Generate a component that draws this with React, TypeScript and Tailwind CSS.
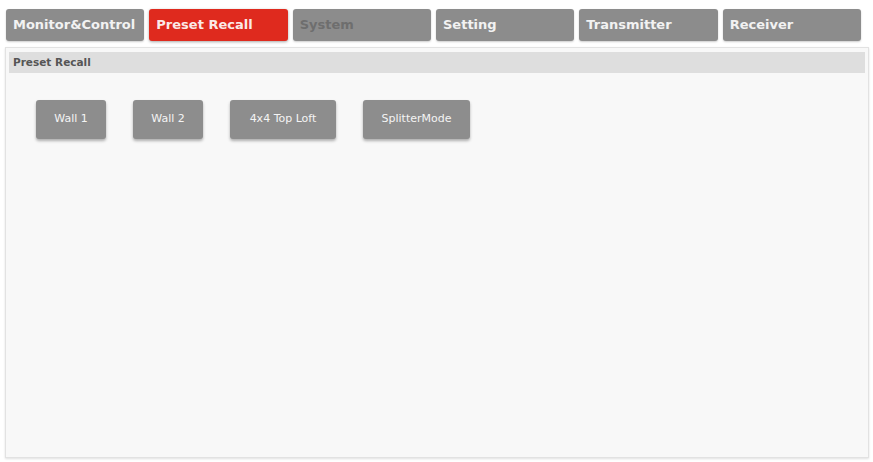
const tabs = [
  { label: 'Monitor&Control', state: 'normal' },
  { label: 'Preset Recall', state: 'active' },
  { label: 'System', state: 'disabled' },
  { label: 'Setting', state: 'normal' },
  { label: 'Transmitter', state: 'normal' },
  { label: 'Receiver', state: 'normal' },
];

const presets = [
  { name: 'Wall 1', w: 'w-[70px]' },
  { name: 'Wall 2', w: 'w-[70px]' },
  { name: '4x4 Top Loft', w: 'w-[106px]' },
  { name: 'SplitterMode', w: 'w-[107px]' },
];

export default function App() {
  return (
    <div className="w-[873px] h-[462px] bg-white font-['DejaVu_Sans',sans-serif] overflow-hidden">
      <div className="w-[861px] flex gap-[5px] pl-[6px] pt-[9px]">
        {tabs.map((t) => (
          <div
            key={t.label}
            className={
              'flex-1 h-[32px] rounded-[3px] flex items-center pl-[7px] text-[13px] font-bold ' +
              (t.state === 'active'
                ? 'bg-[#df2a1e] text-[#fbe9e7] shadow-[0_1px_3px_rgba(0,0,0,0.35)]'
                : t.state === 'disabled'
                ? 'bg-[#8c8c8c] text-[#6e6e6e] shadow-[0_1px_2px_rgba(0,0,0,0.2)]'
                : 'bg-[#8c8c8c] text-[#f2f2f2] shadow-[0_1px_2px_rgba(0,0,0,0.2)]')
            }
          >
            {t.label}
          </div>
        ))}
      </div>
      <div className="mt-[6px] ml-[5px] w-[864px] h-[411px] bg-[#f8f8f8] border border-[#e2e2e2] shadow-[0_1px_2px_rgba(0,0,0,0.12)] px-[3px] pt-[4px]">
        <div className="h-[21px] bg-[#dedede] flex items-center pl-[4px] text-[10.5px] font-bold text-[#555]">
          Preset Recall
        </div>
        <div className="flex gap-[27px] pl-[27px] pt-[27px]">
          {presets.map((p) => (
            <div
              key={p.name}
              className={
                p.w +
                ' h-[39px] rounded-[3px] bg-[#8d8d8d] flex items-center justify-center text-[11px] text-[#f4f4f4] shadow-[0_2px_3px_rgba(0,0,0,0.3)]'
              }
            >
              {p.name}
            </div>
          ))}
        </div>
      </div>
    </div>
  );
}
